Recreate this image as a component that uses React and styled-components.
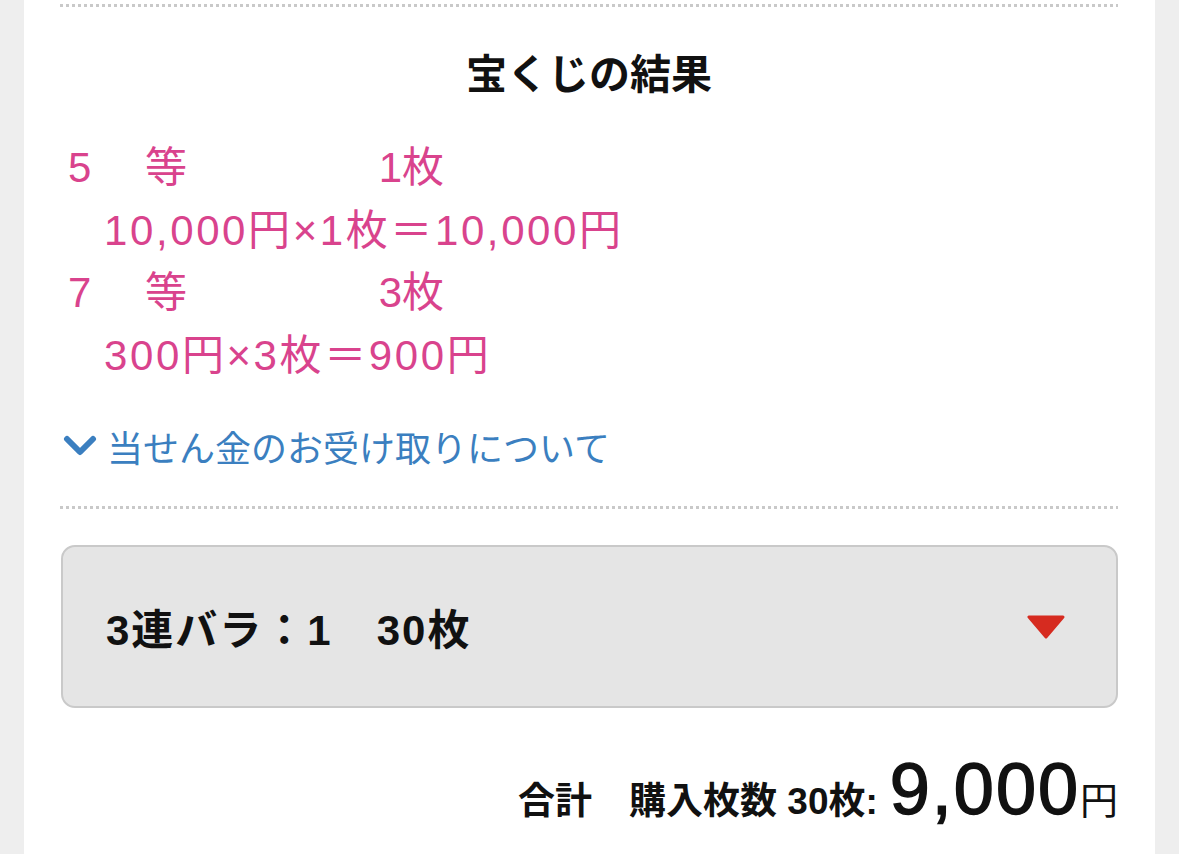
import React from "react"
import styled, { createGlobalStyle } from "styled-components"

const GlobalStyle = createGlobalStyle`
  html, body {
    margin: 0;
    padding: 0;
    background: #eeeeee;
    font-family: "Liberation Sans", "Noto Sans CJK JP", sans-serif;
  }
`

const Page = styled.div`
  width: 1179px;
  height: 854px;
  overflow: hidden;
  display: flex;
`

const Panel = styled.main`
  margin-left: 24px;
  width: 1131px;
  background: #ffffff;
  padding: 4px 37px 0 36px;
  box-sizing: border-box;
`

const Dotted = styled.div`
  height: 3px;
  background: repeating-linear-gradient(
    to right,
    #c9c9c9 0 3px,
    transparent 3px 6px
  );
`

const Title = styled.h2`
  margin: 0;
  padding: 37px 0 0;
  text-align: center;
  font-family: "Noto Sans CJK JP", sans-serif;
  font-size: 41px;
  font-weight: 700;
  line-height: 54px;
  color: #111;
`

const Results = styled.div`
  margin-top: 39px;
  padding-left: 8px;
  color: #d9438d;
  font-size: 42px;
  letter-spacing: 2.6px;
  line-height: 62.5px;
`

const RowHead = styled.div`
  display: flex;
  width: 376px;
`

const Rank = styled.span`
  width: 77px;
`

const Count = styled.span`
  margin-left: auto;
  letter-spacing: 0;
`

const Detail = styled.div`
  padding-left: ${(p) => p.indent}px;
  white-space: nowrap;
`

const InfoLink = styled.a`
  display: flex;
  align-items: center;
  gap: 10px;
  margin-top: 34px;
  padding-left: 3px;
  color: #3b7fc0;
  font-family: "Noto Sans CJK JP", sans-serif;
  font-size: 36px;
  line-height: 50px;
  text-decoration: none;
  cursor: pointer;
`

const Chevron = () => (
  <svg width="34" height="22" viewBox="0 0 34 22">
    <path
      d="M4 4 L17 17 L30 4"
      fill="none"
      stroke="#3b7fc0"
      strokeWidth="6"
      strokeLinecap="round"
      strokeLinejoin="round"
    />
  </svg>
)

const Separator = styled(Dotted)`
  margin-top: 35px;
`

const Select = styled.div`
  margin: 36px 0 0 1px;
  height: 163px;
  box-sizing: border-box;
  border: 2px solid #c9c9c9;
  border-radius: 14px;
  background: #e5e5e5;
  display: flex;
  align-items: center;
  justify-content: space-between;
  padding: 0 50px 0 43px;
  font-size: 42px;
  letter-spacing: 2px;
  font-weight: 700;
  color: #111;
  cursor: pointer;
`

const Triangle = () => (
  <svg width="40" height="24" viewBox="0 0 40 24">
    <path
      d="M3 2 L37 2 L20 22 Z"
      fill="#d62b20"
      stroke="#d62b20"
      strokeWidth="3"
      strokeLinejoin="round"
    />
  </svg>
)

const Total = styled.div`
  display: flex;
  justify-content: flex-end;
  align-items: baseline;
  margin-top: 40px;
  color: #111;
`

const TotalLabel = styled.span`
  font-size: 37px;
  font-weight: 700;
  white-space: pre;
`

const Amount = styled.span`
  margin-left: 12px;
  font-size: 72px;
  font-weight: 400;
  letter-spacing: 2px;
  -webkit-text-stroke: 1.5px #111;
`

const Yen = styled.span`
  font-size: 38px;
`

const results = [
  { rank: "5", count: "1枚", detail: "10,000円×1枚＝10,000円" },
  { rank: "7", count: "3枚", detail: "300円×3枚＝900円" },
]

const App = () => (
  <Page>
    <GlobalStyle />
    <Panel>
      <Dotted />
      <Title>宝くじの結果</Title>
      <Results>
        {results.map((r) => (
          <div key={r.rank}>
            <RowHead>
              <Rank>{r.rank}</Rank>
              <span>等</span>
              <Count>{r.count}</Count>
            </RowHead>
            <Detail indent={36}>{r.detail}</Detail>
          </div>
        ))}
      </Results>
      <InfoLink>
        <Chevron />
        当せん金のお受け取りについて
      </InfoLink>
      <Separator />
      <Select>
        <span>3連バラ：1　30枚</span>
        <Triangle />
      </Select>
      <Total>
        <TotalLabel>合計　購入枚数 30枚:</TotalLabel>
        <Amount>9,000</Amount>
        <Yen>円</Yen>
      </Total>
    </Panel>
  </Page>
)

export default App
